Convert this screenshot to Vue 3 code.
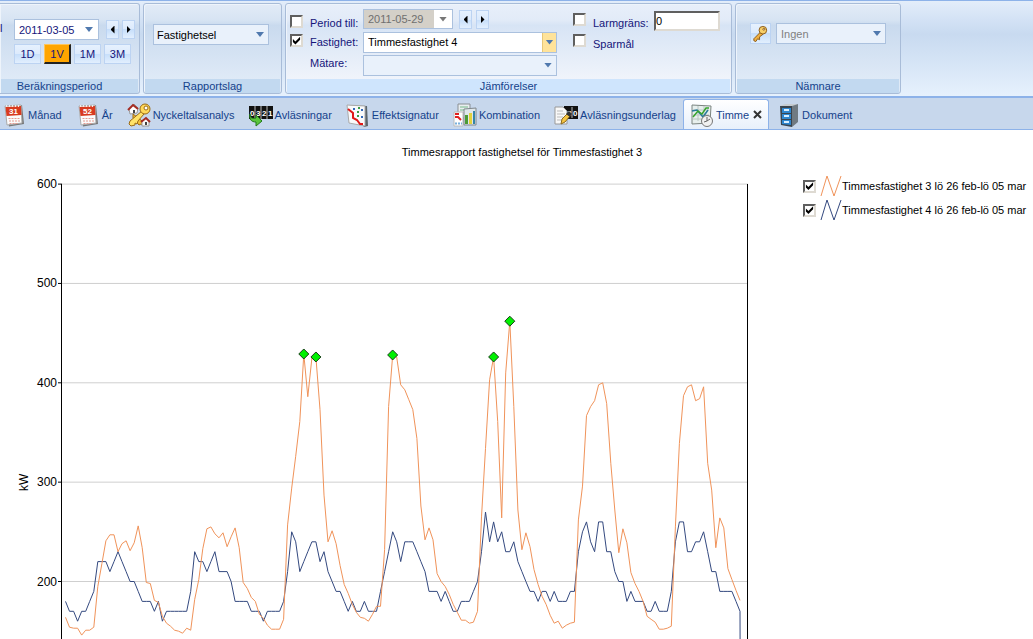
<script setup>
import { ref } from 'vue'

const date = ref('2011-03-05')
const compareDate = ref('2011-05-29')
const limit = ref('0')
const span = ref('1V')
const spans = ['1D', '1V', '1M', '3M']
const activeTab = ref('Timme')
const tabs = [
  { name: 'Månad', icon: 'cal', num: '31' },
  { name: 'År', icon: 'cal', num: '52' },
  { name: 'Nyckeltalsanalys', icon: 'keys' },
  { name: 'Avläsningar', icon: 'meter' },
  { name: 'Effektsignatur', icon: 'scatter' },
  { name: 'Kombination', icon: 'combo' },
  { name: 'Avläsningsunderlag', icon: 'notes' },
  { name: 'Timme', icon: 'hour', closable: true },
  { name: 'Dokument', icon: 'cabinet' }
]

const first = [
  164, 154, 153, 153, 146, 151, 151, 154, 195, 218, 241, 247, 247, 230, 238, 241, 231, 239, 256, 234, 199, 198, 181, 179,
  165, 158, 155, 151, 150, 148, 153, 151, 182, 202, 233, 253, 255, 248, 244, 249, 235, 245, 254, 234, 199, 193, 184, 180,
  167, 163, 156, 152, 152, 152, 162, 257, 294, 326, 361, 429, 386, 425, 426, 373, 287, 240, 251, 238, 216, 197, 188, 177,
  169, 164, 163, 160, 167, 175, 175, 232, 376, 428, 426, 398, 393, 383, 373, 344, 276, 242, 254, 242, 208, 200, 195, 187,
  177, 169, 161, 161, 158, 159, 170, 265, 334, 403, 426, 361, 264, 410, 462, 376, 272, 232, 249, 235, 212, 197, 185, 177,
  166, 158, 160, 153, 156, 158, 159, 262, 296, 367, 376, 382, 398, 400, 379, 319, 272, 229, 253, 239, 209, 198, 190, 180,
  165, 162, 159, 152, 152, 153, 155, 255, 339, 387, 396, 398, 382, 384, 396, 319, 292, 234, 264, 254, 213, 202, 191, 181
]
const second = [
  180, 170, 170, 160, 170, 170, 180, 190, 220, 220, 220, 210, 220, 230, 220, 210, 200, 200, 190, 180, 180, 180, 170, 180,
  160, 170, 170, 170, 170, 170, 170, 190, 230, 220, 220, 210, 220, 230, 210, 210, 210, 200, 180, 180, 180, 180, 170, 170,
  170, 160, 170, 170, 170, 170, 180, 210, 250, 240, 210, 220, 230, 240, 240, 220, 230, 210, 200, 190, 190, 180, 170, 180,
  170, 170, 180, 170, 170, 170, 190, 210, 230, 250, 240, 220, 240, 240, 240, 230, 220, 210, 190, 190, 190, 180, 190, 180,
  170, 170, 180, 180, 180, 190, 200, 230, 270, 240, 260, 240, 250, 230, 230, 240, 220, 210, 200, 190, 190, 180, 190, 190,
  180, 190, 180, 180, 180, 190, 190, 230, 250, 260, 240, 230, 260, 260, 230, 230, 210, 200, 200, 180, 190, 180, 180, 180,
  170, 170, 180, 170, 170, 170, 190, 240, 260, 260, 230, 230, 240, 240, 250, 230, 210, 210, 190, 190, 190, 190, 180, 170
]

const left = 65.5
const right = 740
const px = (i) => left + (i * (right - left)) / (first.length - 1)
const py = (v) => 406.5 - (v - 200) * 0.9935
const line = (values) => values.map((v, i) => `${px(i).toFixed(1)},${py(v).toFixed(1)}`).join(' ')
const firstLine = line(first)
const secondLine = `${line(second)} ${right + 0.5},${py(0)}`
const peaks = [59, 62, 81, 106, 110]
const ticks = [600, 500, 400, 300, 200]
const legend = ref([
  { label: 'Timmesfastighet 3 lö 26 feb-lö 05 mar', tone: 'warm', on: true },
  { label: 'Timmesfastighet 4 lö 26 feb-lö 05 mar', tone: 'cool', on: true }
])
</script>

<template>
  <div class="app">
    <header class="ribbon">
      <section class="group period">
        <div class="body">
          <div class="row">
            <label class="cut" for="date">l</label>
            <div class="combo date">
              <input id="date" v-model="date" type="text" />
              <button type="button" class="drop" aria-label="Välj datum"><i class="down"></i></button>
            </div>
            <div class="steps">
              <button type="button" class="step" aria-label="Föregående"><i class="prev"></i></button>
              <button type="button" class="step" aria-label="Nästa"><i class="next"></i></button>
            </div>
          </div>
          <div class="spans">
            <button v-for="s in spans" :key="s" type="button" class="span" :class="{ on: s === span }" @click="span = s">{{ s }}</button>
          </div>
        </div>
        <h2>Beräkningsperiod</h2>
      </section>

      <section class="group report">
        <div class="body">
          <div class="combo pale">
            <select aria-label="Rapportslag"><option>Fastighetsel</option></select>
            <i class="down"></i>
          </div>
        </div>
        <h2>Rapportslag</h2>
      </section>

      <section class="group compare">
        <div class="body">
          <div class="fields">
            <input id="c1" type="checkbox" class="check low" />
            <label for="c1" class="low">Period till:</label>
            <div class="row">
              <div class="combo date off">
                <input v-model="compareDate" type="text" disabled aria-label="Period till" />
                <button type="button" class="drop" disabled aria-label="Välj datum"><i class="down grey"></i></button>
              </div>
              <div class="steps">
                <button type="button" class="step" aria-label="Föregående"><i class="prev"></i></button>
                <button type="button" class="step" aria-label="Nästa"><i class="next"></i></button>
              </div>
            </div>
            <input id="c2" type="checkbox" class="check" checked />
            <label for="c2">Fastighet:</label>
            <div class="combo hot">
              <select aria-label="Fastighet"><option>Timmesfastighet 4</option></select>
              <i class="down"></i>
            </div>
            <span></span>
            <label for="meter" class="high">Mätare:</label>
            <div class="combo pale">
              <select id="meter"></select>
              <i class="down"></i>
            </div>
          </div>
          <div class="limits">
            <input id="c3" type="checkbox" class="check" />
            <label for="c3">Larmgräns:</label>
            <input v-model="limit" type="text" class="sunken" aria-label="Larmgräns" />
            <input id="c4" type="checkbox" class="check" />
            <label for="c4">Sparmål</label>
          </div>
        </div>
        <h2>Jämförelser</h2>
      </section>

      <section class="group denom">
        <div class="body">
          <button type="button" class="keybtn" aria-label="Nyckel">
            <svg viewBox="0 0 20 20" width="20" height="20">
              <path d="M10 8 3 15v2l2 1 2-3 2 1v-3l4-3" fill="#f0b040" stroke="#8a5a18" />
              <circle cx="12.500" cy="6" r="4" fill="#f7cf68" stroke="#8a5a18" />
              <circle cx="13.500" cy="5" r="1" fill="#fff" stroke="#8a5a18" />
            </svg>
          </button>
          <div class="combo pale ghost">
            <select disabled aria-label="Nämnare"><option>Ingen</option></select>
            <i class="down"></i>
          </div>
        </div>
        <h2>Nämnare</h2>
      </section>
    </header>

    <nav class="tabs">
      <div v-for="t in tabs" :key="t.name" class="tab" :class="{ active: t.name === activeTab }">
        <button type="button" class="open" @click="activeTab = t.name">
          <svg class="icon" viewBox="0 0 24 24" width="24" height="24">
            <g v-if="t.icon === 'cal'">
              <path d="M4 3 20 2l2 19-15 2.500z" fill="#777" />
              <path d="M3 3 19 2l1 18-15 2z" fill="#fbfbfb" stroke="#aaa" />
              <path d="M3.500 4 19 3l.5 9-15 1z" fill="#d83a20" />
              <path d="M4 3h15" stroke="#eee" stroke-width="2" stroke-dasharray="1 2" />
              <path d="M6.500 15.500h11M7 18h11M7.500 20.500h8" stroke="#e59b90" stroke-dasharray="2 1" />
              <text x="11.500" y="11" text-anchor="middle" class="num">{{ t.num }}</text>
            </g>
            <g v-else-if="t.icon === 'keys'">
              <path d="M2 6 7 1l4 4-1 5-7 1z" fill="#fff" stroke="#999" />
              <path d="M1 7 6 2l5 4" fill="none" stroke="#a52c24" stroke-width="2" />
              <path d="M6 7h2v3H6z" fill="#444" />
              <path d="m6 11 13 10-2 2-3-2-2 1-6-7z" fill="#f3bf3c" stroke="#9b6a15" />
              <path d="m15 8-12 10-1 3 2 2 4-1v-2l2 1 1-3 6-7z" fill="#ffe36a" stroke="#9b6a15" />
              <circle cx="18" cy="6" r="5" fill="#ffd95a" stroke="#9b6a15" />
              <circle cx="19" cy="5" r="2" fill="#fff" stroke="#9b6a15" />
              <path d="M15 18v5h7v-5l-3-3z" fill="#f8f8f8" stroke="#999" />
              <path d="m14 19 5-4 4 4" fill="none" stroke="#a52c24" stroke-width="2" />
              <path d="M18 19h2v3h-2z" fill="#444" />
            </g>
            <g v-else-if="t.icon === 'meter'">
              <path d="M0 3h24v13H0z" fill="#111" />
              <path d="M6 3v13M12 3v13M18 3v13" stroke="#bbb" />
              <text x="1" y="13" class="digit">0</text>
              <text x="7" y="13" class="digit">3</text>
              <text x="13" y="13" class="digit">2</text>
              <text x="19" y="13" class="digit">1</text>
              <path d="M1 11c0 4 2 5 6 4v-3l6 6-6 5v-4c-5 0-7-3-6-8z" fill="#5ac53c" stroke="#237a1a" />
            </g>
            <g v-else-if="t.icon === 'scatter'">
              <path d="m3 2 18 1 1 20-4 1z" fill="#5b656c" />
              <path d="m1 2 18 1v20L3 20z" fill="#f9fafb" stroke="#aaa" />
              <path d="m2 6 5 4v5l4 2 3 4h3" fill="none" stroke="#e01818" stroke-width="2" />
              <path d="M7 5h2v2H7zM15 6h2v2h-2zM15 13h2v2h-2z" fill="#3268b8" />
              <path d="M11 8h2v2h-2zM12 4h2v2h-2zM11 12h2v2h-2z" fill="#3d9c48" />
            </g>
            <g v-else-if="t.icon === 'combo'">
              <path d="M5 1h12v14H5z" fill="#e9eef0" stroke="#8a8f94" />
              <path d="M7 7h8M7 4h8" stroke="#77b98a" />
              <path d="M1 9h9v14H1z" fill="#fff" stroke="#bbb" />
              <path d="M2 11h4M2 14h3l3 3" stroke="#e02020" stroke-width="2" fill="none" />
              <path d="M2 20.500h7" stroke="#7ab0dc" stroke-width="2" stroke-dasharray="2 1" />
              <path d="m11 6 12-1v17H11z" fill="#dfe7ea" stroke="#80878c" />
              <path d="M12 12h3v9h-3z" fill="#4a9b35" />
              <path d="M16 10h3v11h-3z" fill="#e2d23c" />
              <path d="M20 8h2v13h-2z" fill="#3485a8" />
            </g>
            <g v-else-if="t.icon === 'notes'">
              <path d="M10 3h14v13H10z" fill="#111" />
              <path d="M18 4v11" stroke="#bbb" />
              <text x="13" y="13" class="digit">3</text>
              <text x="19" y="13" class="digit">0</text>
              <path d="M1 4h8l4 4v13H1z" fill="#f8f8f8" stroke="#999" />
              <path d="M3 8h6M3 11h8M3 14h6M3 17h5" stroke="#bbb" />
              <path d="m7 21 1-5 5-5 3 2-5 6z" fill="#f5c542" stroke="#8d6a1c" />
              <path d="m12 11 3-3 3 3-2 3z" fill="#333" />
            </g>
            <g v-else-if="t.icon === 'hour'">
              <path d="m2 2 19 1-1 17L2 21z" fill="#e7efed" stroke="#7b8480" />
              <path d="M3 7h16M3 12h16M3 16h16M8 3v15M14 3v15" stroke="#b9c6c2" />
              <path d="m2 8 5-1 6 7 5-7" fill="none" stroke="#277a9a" stroke-width="1.500" />
              <path d="m3 14 5-6 4 3 4-6h3" fill="none" stroke="#37a32c" stroke-width="1.500" />
              <circle cx="17" cy="18" r="5.500" fill="#f1f1f1" stroke="#777" />
              <path d="M17 14v4l-3 1M17 18l3-2" fill="none" stroke="#666" />
            </g>
            <g v-else>
              <path d="m4 3 5-2h13l-5 2z" fill="#c5cbd0" />
              <path d="m16 3 6-2v18l-6 5z" fill="#707a82" />
              <path d="M4 3h12v21L5 22z" fill="#39444f" />
              <path d="M6 5h9v5H6zM6 11h9v5H6zM6 17h9v5l-9-1z" fill="#2e86cf" />
              <path d="M8 7h5M8 13h5M8 19h5" stroke="#d9efff" stroke-width="2" />
            </g>
          </svg>
          <span>{{ t.name }}</span>
        </button>
        <button v-if="t.closable" type="button" class="close" aria-label="Stäng">
          <svg viewBox="0 0 9 9" width="9" height="9"><path d="m1 1 7 7M8 1 1 8" stroke="#333" stroke-width="2" /></svg>
        </button>
      </div>
    </nav>

    <main>
      <h1>Timmesrapport fastighetsel för Timmesfastighet 3</h1>
      <div class="chart">
        <svg class="plot" viewBox="0 0 803 464">
          <g v-for="t in ticks" :key="t">
            <line x1="58" :x2="62" :y1="py(t)" :y2="py(t)" stroke="#000" />
            <line x1="62" x2="748" :y1="py(t)" :y2="py(t)" stroke="#cfcfcf" />
            <text x="57" :y="py(t) + 4" text-anchor="end">{{ t }}</text>
          </g>
          <path d="M61.500 9v455M747.500 9v455" stroke="#000" />
          <text transform="translate(28 316) rotate(-90)">kW</text>
          <polyline v-if="legend[1].on" :points="secondLine" class="cool" />
          <polyline v-if="legend[0].on" :points="firstLine" class="warm" />
          <path
            v-for="p in peaks"
            :key="p"
            :transform="`translate(${px(p)} ${py(first[p])})`"
            d="m0-5 5 5-5 5-5-5z"
            fill="#00f000"
            stroke="#173d17"
          />
        </svg>
        <div class="legend">
          <label v-for="l in legend" :key="l.tone">
            <input v-model="l.on" type="checkbox" class="check" />
            <svg width="22" height="22" viewBox="0 0 22 22"><path :class="l.tone" d="m1 21 6-20 7 20 7-20" /></svg>
            <span>{{ l.label }}</span>
          </label>
        </div>
      </div>
    </main>
  </div>
</template>

<style>
body {
  margin: 0;
  background: #fff;
}
</style>

<style scoped>
.app,
.app * {
  box-sizing: border-box;
}
.app {
  font: 11px/16px 'Liberation Sans', Arial, sans-serif;
  color: #000;
  overflow: hidden;
}
button,
input,
select {
  font: inherit;
  color: inherit;
  margin: 0;
  padding: 0;
}
.ribbon {
  display: flex;
  gap: 3px;
  height: 98px;
  padding: 2px 0 3px;
  border-top: 1px solid #8db2e9;
  border-bottom: 2px solid #8db2e9;
  background: linear-gradient(#e3edfa, #d3e2f5 20%, #c8daf0 35%, #e6f1fd);
}
.group {
  display: flex;
  flex-direction: column;
  height: 91px;
  border: 1px solid #a8bcd8;
  border-radius: 3px;
  background: linear-gradient(#e2ebf7, #d7e4f3 18%, #c9daee 24%, #dfeaf7 85%);
  box-shadow: inset 1px 1px #eef4fb;
}
.body {
  flex: 1;
  display: flex;
}
h2 {
  margin: 0 1px;
  height: 14px;
  font: inherit;
  line-height: 15px;
  text-align: center;
  color: #15428b;
  background: #c2d9f0;
}
.period {
  width: 140px;
  border-left: 0;
  border-radius: 0 3px 3px 0;
}
.period .body {
  flex-direction: column;
  gap: 4px;
  padding-top: 15px;
}
.period h2 {
  padding-right: 20px;
}
.report {
  width: 139px;
}
.compare {
  width: 447px;
  background: linear-gradient(#e8effa, #e2ebf8 18%, #d7e4f5 24%, #f0f4fb 85%);
}
.compare h2 {
  background: #cfe5fd;
}
.denom {
  width: 166px;
}
.row {
  display: flex;
}
.cut {
  width: 14px;
  line-height: 18px;
  color: #15157a;
}
.combo {
  display: flex;
  align-items: center;
  height: 21px;
  border: 1px solid #abc1de;
  background: #fff;
}
.combo input,
.combo select {
  flex: 1;
  min-width: 0;
  height: 100%;
  padding-left: 4px;
  border: 0;
  border-radius: 0;
  background: transparent;
  appearance: none;
  opacity: 1;
}
.combo > .down {
  flex: none;
  margin: 0 4px;
  pointer-events: none;
}
.pale {
  background: #e9f1fb;
}
.period .date {
  width: 85px;
  color: #15157a;
}
.drop {
  display: flex;
  align-items: center;
  justify-content: center;
  width: 18px;
  height: 100%;
  border: 0;
  background: transparent;
}
.down {
  width: 8px;
  height: 5px;
  background: #5079ae;
  clip-path: polygon(0 0, 100% 0, 50% 100%);
}
.grey {
  background: #777;
}
.steps {
  display: flex;
  gap: 3px;
  margin: 1px 0 0 7px;
}
.step {
  display: flex;
  align-items: center;
  justify-content: center;
  width: 13px;
  height: 19px;
  border: 1px solid #bcd3f2;
  background: linear-gradient(#e6f1fe, #dceafc 50%, #c6defa 50%, #e2effe);
}
.prev,
.next {
  width: 4px;
  height: 8px;
  background: #000;
  clip-path: polygon(100% 0, 100% 100%, 0 50%);
}
.next {
  clip-path: polygon(0 0, 100% 50%, 0 100%);
}
.spans {
  display: flex;
  gap: 3px;
  padding-left: 14px;
}
.span {
  width: 27px;
  height: 20px;
  border: 1px solid #bcd3f2;
  color: #15157a;
  background: linear-gradient(#e6f1fe, #dceafc 50%, #c6defa 50%, #e2effe);
}
.span.on {
  background: #ffa500;
  border-color: #ffc65a #222 #222 #ffc65a;
  border-width: 1px 2px 2px 1px;
}
.report .body {
  padding: 20px 12px 0 9px;
}
.report .combo {
  flex: 1;
}
.report select {
  padding-left: 3px;
}
.compare .body {
  gap: 16px;
  padding: 5px 12px 0 4px;
  color: #15157a;
}
.fields {
  display: grid;
  grid-template-columns: 20px 53px 194px;
  grid-auto-rows: 20px;
  row-gap: 3px;
  align-items: center;
}
.low {
  margin-top: 8px;
}
.high {
  margin-bottom: 4px;
}
.fields .date {
  width: 90px;
  height: 20px;
  color: #6f6f6f;
}
.off input {
  background: #d4d0c8;
}
.fields .steps {
  gap: 4px;
  margin: 1px 0 0 6px;
}
.hot,
.fields .pale {
  color: #000;
}
.hot > .down {
  display: flex;
  align-items: center;
  justify-content: center;
  width: 14px;
  height: 100%;
  margin: 0;
  border-left: 1px solid #e8c877;
  background: #ffe39a;
  clip-path: none;
}
.hot > .down::after {
  content: '';
  width: 8px;
  height: 5px;
  background: #5079ae;
  clip-path: polygon(0 0, 100% 0, 50% 100%);
}
.check {
  appearance: none;
  width: 13px;
  height: 13px;
  border: 2px solid;
  border-color: #5f5f5f #dedad2 #dedad2 #5f5f5f;
  background: #fff;
}
.body .check {
  margin-bottom: 3px;
}
.check:checked::after {
  content: '';
  display: block;
  width: 9px;
  height: 9px;
  background: #000;
  clip-path: polygon(10% 32%, 38% 60%, 90% 8%, 90% 42%, 38% 94%, 10% 66%);
}
.limits {
  display: grid;
  grid-template-columns: 20px 61px 66px;
  grid-template-rows: 20px 20px;
  row-gap: 1px;
  margin-top: 2px;
  height: 41px;
  align-items: center;
}
.limits label {
  padding-top: 3px;
}
.sunken {
  width: 66px;
  height: 20px;
  border: 2px solid;
  border-color: #5f5f5f #dedad2 #dedad2 #5f5f5f;
  background: #fff;
  color: #000;
}
.denom .body {
  gap: 5px;
  padding: 19px 14px 0;
}
.denom .combo {
  flex: 1;
}
.ghost {
  color: #808080;
}
.keybtn {
  display: flex;
  width: 21px;
  height: 21px;
  border: 1px solid #bcd3f2;
  background: linear-gradient(#e6f1fe, #dceafc 50%, #c6defa 50%, #e2effe);
}
.tabs {
  display: flex;
  height: 32px;
  padding: 1px 0 0 2px;
  margin-left: -7px;
  border-bottom: 1px solid #8db2e9;
  background: #c7d7ec;
}
.tab {
  display: flex;
  align-items: center;
  padding: 0 6px;
  border: 1px solid transparent;
  border-bottom: 0;
  color: #15428b;
}
.tab.active {
  border-color: #8db2e9;
  border-radius: 3px 3px 0 0;
  background: linear-gradient(#fff, #e8f0fb);
}
.open {
  display: flex;
  align-items: center;
  gap: 2px;
  border: 0;
  background: none;
  white-space: nowrap;
}
.close {
  display: flex;
  margin-left: 4px;
  border: 0;
  background: none;
}
.num,
.digit {
  font: bold 8px 'Liberation Sans', Arial, sans-serif;
  fill: #fff;
}
h1 {
  margin: 14px 0 15px 11px;
  font: inherit;
  text-align: center;
}
.chart {
  display: grid;
  grid-template-columns: minmax(0, 1fr) 230px;
}
.plot {
  display: block;
  width: 100%;
  font-size: 12px;
}
.plot polyline,
.legend path {
  fill: none;
  stroke-width: 1;
}
.warm {
  stroke: #f0935a;
}
.cool {
  stroke: #34497f;
}
.legend {
  display: flex;
  flex-direction: column;
  gap: 2px;
}
.legend label {
  display: flex;
  align-items: center;
  height: 22px;
  white-space: nowrap;
}
.legend .check,
.legend svg {
  flex: none;
}
.legend svg {
  margin-left: 4px;
}
</style>
